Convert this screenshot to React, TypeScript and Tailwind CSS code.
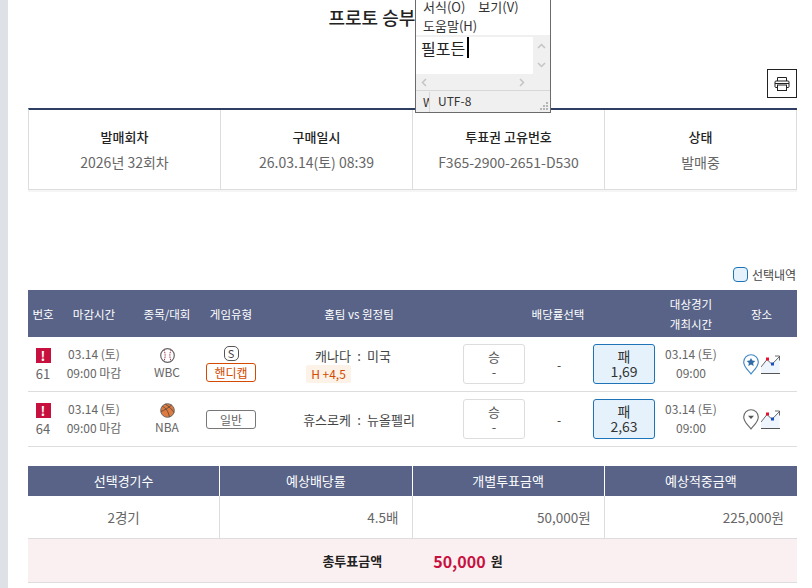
import React from "react";

const FONT = "font-['Noto_Sans_CJK_KR','Noto_Sans',sans-serif]";

function Alert() {
  return (
    <span className="flex h-[15px] w-[15px] items-center justify-center bg-[#c8103f] text-[13px] leading-none font-bold text-white">!</span>
  );
}

function Baseball() {
  return (
    <svg width="15" height="15" viewBox="0 0 15 15" fill="none">
      <circle cx="7.5" cy="7.5" r="6.8" fill="#fff" stroke="#666" strokeWidth="1.2" />
      <path d="M3.8 2C5.6 5 5.6 10 3.8 13" stroke="#a33a4a" strokeWidth="1" strokeDasharray="1.4 .8" />
      <path d="M11.2 2C9.4 5 9.4 10 11.2 13" stroke="#a33a4a" strokeWidth="1" strokeDasharray="1.4 .8" />
    </svg>
  );
}

function Basketball() {
  return (
    <svg width="15" height="15" viewBox="0 0 15 15" fill="none">
      <circle cx="7.5" cy="7.5" r="6.8" fill="#e07b3f" stroke="#666" strokeWidth="1" />
      <path d="M2.3 3.2C5.6 4.7 8.5 8.5 9.4 14M5.2 1.1C8.5 2.8 12.2 6.6 14 9.4M1 8.5C3.8 7.5 8.5 4.7 11.8 1.9" stroke="#5c4a40" strokeWidth=".9" />
    </svg>
  );
}

function Pin({ star }: { star: boolean }) {
  const c = star ? "#3f86c4" : "#666";
  return (
    <svg width="16" height="21" viewBox="0 0 16 21" fill="none">
      <path d="M8 20C5 16 .7 13 .7 8a7.3 7.3 0 0 1 14.6 0c0 5-4.3 8-7.3 12Z" fill="#fff" stroke={c} strokeWidth="1.1" />
      {star ? (
        <path d="M8 3.9l1.3 2.7 3 .4-2.2 2 .6 3-2.7-1.5-2.7 1.5.6-3-2.2-2 3-.4Z" fill="#2f6ca8" />
      ) : (
        <path d="M5 6.8h6l-3 3.2Z" fill="#555" />
      )}
    </svg>
  );
}

function Trend() {
  return (
    <svg width="19" height="19" viewBox="0 0 19 19" fill="none">
      <path d="M0 12L6 4.5l5 4.8L18.5 1.5V18H0Z" fill="#eef5fc" />
      <path d="M0 12L6 4.5l5 4.8L18.5 1.5" stroke="#444" strokeWidth=".8" />
      <path d="M14 1h4.5v4.5" stroke="#444" strokeWidth=".8" />
      <rect x="5" y="2.5" width="3" height="3" fill="#e8112d" />
      <rect x="10" y="7.5" width="3" height="3" fill="#1a4fc0" />
      <path d="M0 18.5h19" stroke="#555" strokeWidth="1" />
    </svg>
  );
}

function Printer() {
  return (
    <svg width="16" height="16" viewBox="0 0 16 16" fill="none" stroke="#222" strokeWidth="1">
      <path d="M3.5 5V1.5h9V5" />
      <rect x="1" y="5" width="14" height="6.5" rx="1" />
      <rect x="3.5" y="9" width="9" height="5.5" fill="#fff" />
      <path d="M1 7.5h14" />
    </svg>
  );
}

function Odds({ label, value, active }: { label: string; value: string; active?: boolean }) {
  return (
    <div
      className={
        active
          ? "flex h-10 w-[62px] flex-col items-center justify-center rounded-[3px] border border-[#1f74b8] bg-[#e5f2fc] text-[14px] leading-[15px] text-[#333]"
          : "flex h-10 w-[62px] flex-col items-center justify-center rounded-[3px] border border-[#ddd] bg-white text-[13px] leading-[15px] text-[#555]"
      }
    >
      <span>{label}</span>
      <span>{value}</span>
    </div>
  );
}

const ROW = "grid grid-cols-[30px_72px_74px_54px_202px_196px_70px_71px] items-center";

function GameRow(p: {
  no: string;
  league: string;
  ball: React.ReactNode;
  type: React.ReactNode;
  home: string;
  away: string;
  handicap?: string;
  odds: string;
  star: boolean;
}) {
  return (
    <div className={`${ROW} h-[55px] border-b border-[#ddd] text-[12px] leading-[19px] text-[#666]`}>
      <div className="flex flex-col items-center gap-[1px] pt-[3px] text-[13px]">
        <Alert />
        <span>{p.no}</span>
      </div>
      <div className="pb-[2px] text-center">
        <div>03.14 (토)</div>
        <div>09:00 마감</div>
      </div>
      <div className="flex flex-col items-center leading-[18px]">
        {p.ball}
        <span>{p.league}</span>
      </div>
      <div className="flex flex-col items-center gap-[2px]">{p.type}</div>
      <div className="flex items-start text-[13px] text-[#444]">
        <div className="flex flex-1 flex-col items-end">
          <span>{p.home}</span>
          {p.handicap && (
            <span className="flex h-[18px] w-[45px] items-center justify-center rounded-[2px] bg-[#fdf2e8] text-[12px] text-[#d44a00]">{p.handicap}</span>
          )}
        </div>
        <span className="w-[16px] text-center">:</span>
        <span className="flex-1">{p.away}</span>
      </div>
      <div className="flex items-center justify-between pr-px pl-[3px]">
        <Odds label="승" value="-" />
        <span className="text-[#333]">-</span>
        <Odds label="패" value={p.odds} active />
      </div>
      <div className="pb-[2px] text-center">
        <div>03.14 (토)</div>
        <div>09:00</div>
      </div>
      <div className="flex items-center justify-center gap-[2px]">
        <Pin star={p.star} />
        <Trend />
      </div>
    </div>
  );
}

function Notepad() {
  return (
    <div className="absolute top-0 left-[407px] flex h-[113px] w-[136px] flex-col overflow-hidden border-x border-b border-[#6b6b6b] bg-[#f0f0f0] text-[12px] text-[#333]">
      <div className="h-[35px] shrink-0 bg-white text-[13px]">
        <div className="-mt-[3px] flex h-[19px] items-center gap-[13px] pl-[7px]">
          <span>서식(O)</span>
          <span>보기(V)</span>
        </div>
        <div className="flex h-[19px] items-center pl-[7px]">도움말(H)</div>
      </div>
      <div className="mt-[2px] flex h-[37px] shrink-0">
        <div className="flex flex-1 items-start bg-white pl-[5px] text-[16px] leading-[22px] text-[#222]">
          <span>필포든</span>
          <span className="ml-[2px] h-[21px] w-[2px] bg-black" />
        </div>
        <div className="flex w-[17px] flex-col items-center justify-around text-[#c4c4c4]">
          <svg width="9" height="6" viewBox="0 0 9 6" fill="none" stroke="currentColor" strokeWidth="1.5"><path d="M1 5l3.5-3.5L8 5" /></svg>
          <svg width="9" height="6" viewBox="0 0 9 6" fill="none" stroke="currentColor" strokeWidth="1.5"><path d="M1 1l3.5 3.5L8 1" /></svg>
        </div>
      </div>
      <div className="flex h-[16px] shrink-0 items-center justify-between pr-[25px] pl-[5px]">
        <svg width="6" height="9" viewBox="0 0 6 9" fill="none" stroke="#c4c4c4" strokeWidth="1.5"><path d="M5 1L1.5 4.5 5 8" /></svg>
        <svg width="6" height="9" viewBox="0 0 6 9" fill="none" stroke="#c4c4c4" strokeWidth="1.5"><path d="M1 1l3.5 3.5L1 8" /></svg>
      </div>
      <div className="flex flex-1 items-center border-t border-[#d7d7d7]">
        <span className="w-[14px] overflow-hidden border-r border-[#d7d7d7] pl-[7px] leading-[20px]">W</span>
        <span className="pb-[2px] pl-[8px]">UTF-8</span>
        <svg className="mt-auto mr-[1px] mb-[1px] ml-auto" width="10" height="10" viewBox="0 0 10 10" fill="#b5b5b5">
          <rect x="7" y="1" width="2" height="2" /><rect x="4" y="4" width="2" height="2" /><rect x="7" y="4" width="2" height="2" /><rect x="1" y="7" width="2" height="2" /><rect x="4" y="7" width="2" height="2" /><rect x="7" y="7" width="2" height="2" />
        </svg>
      </div>
    </div>
  );
}

const INFO = [
  ["발매회차", "2026년 32회차"],
  ["구매일시", "26.03.14(토) 08:39"],
  ["투표권 고유번호", "F365-2900-2651-D530"],
  ["상태", "발매중"],
];

export default function App() {
  return (
    <div className={`flex h-[588px] w-[812px] overflow-hidden bg-white ${FONT}`}>
      <div className="w-2 shrink-0 bg-[#dee1e6]" />
      <div className="relative w-[789px] pl-5">
        <Notepad />
        <h1 className="h-[69px] pt-[3px] pr-[11px] text-center text-[18px] leading-[28px] font-medium text-[#222]">프로토 승부식 투표권</h1>
        <div className="flex h-[39px] items-start justify-end">
          <button className="flex h-[29px] w-[30px] items-center justify-center border border-[#222] bg-white">
            <Printer />
          </button>
        </div>

        <div className="grid grid-cols-4 border-t-2 border-b border-l border-[#ddd] border-t-[#2f3e63] shadow-[0_2px_0_#f5f5f5]">
          {INFO.map(([h, v]) => (
            <div key={h} className="flex h-[79px] flex-col items-center justify-center gap-[7px] border-r border-[#ddd]">
              <div className="text-[13px] leading-[19px] font-medium text-[#222]">{h}</div>
              <div className="text-[14px] leading-[19px] text-[#666]">{v}</div>
            </div>
          ))}
        </div>

        <div className="mt-[77px] flex h-[23px] items-start justify-end gap-1 text-[12px] leading-[15px] text-[#444]">
          <span className="h-[15px] w-[15px] rounded-[4px] border border-[#1f74b8] bg-[#e5f2fc]" />
          <span className="w-[45px] whitespace-nowrap">선택내역</span>
        </div>

        <div className={`${ROW} h-[47px] bg-[#586387] text-center text-[11.5px] leading-[20px] text-white`}>
          <div>번호</div>
          <div>마감시간</div>
          <div>종목/대회</div>
          <div>게임유형</div>
          <div>홈팀 vs 원정팀</div>
          <div>배당률선택</div>
          <div>대상경기<br />개최시간</div>
          <div>장소</div>
        </div>
        <GameRow
          no="61"
          league="WBC"
          ball={<Baseball />}
          home="캐나다"
          away="미국"
          handicap="H +4,5"
          odds="1,69"
          star
          type={
            <>
              <span className="flex h-[15px] w-[15px] items-center justify-center rounded-[5px] border border-[#555] text-[11px] leading-none text-[#444]">S</span>
              <span className="flex h-[19px] w-[50px] items-center justify-center rounded-[3px] border border-[#d44a00] text-[#d44a00]">핸디캡</span>
            </>
          }
        />
        <GameRow
          no="64"
          league="NBA"
          ball={<Basketball />}
          home="휴스로케"
          away="뉴올펠리"
          odds="2,63"
          star={false}
          type={<span className="flex h-[19px] w-[50px] items-center justify-center rounded-[3px] border border-[#777] text-[#666]">일반</span>}
        />

        <div className="mt-[19px] grid h-[30px] grid-cols-4 bg-[#586387] text-[13px] text-white">
          {["선택경기수", "예상배당률", "개별투표금액", "예상적중금액"].map((t, i) => (
            <div key={t} className={i === 3 ? "flex items-center justify-center" : "flex items-center justify-center border-r border-white"}>{t}</div>
          ))}
        </div>
        <div className="grid h-[43px] grid-cols-4 border-b border-[#ddd] text-[13.5px] text-[#666]">
          <div className="flex items-center justify-center border-r border-[#ddd]">2경기</div>
          <div className="flex items-center justify-end border-r border-[#ddd] pr-[13px]">4.5배</div>
          <div className="flex items-center justify-end border-r border-[#ddd] pr-[13px]">50,000원</div>
          <div className="flex items-center justify-end pr-[13px]">225,000원</div>
        </div>
        <div className="flex h-[44px] items-center justify-center gap-[51px] border-b border-[#ddd] bg-[#fbf0f1] text-[13px] font-bold text-[#222]">
          <span>총투표금액</span>
          <span className="flex items-center gap-[5px]">
            <span className="text-[16px] text-[#c8103f]">50,000</span>
            <span>원</span>
          </span>
        </div>
      </div>
    </div>
  );
}
